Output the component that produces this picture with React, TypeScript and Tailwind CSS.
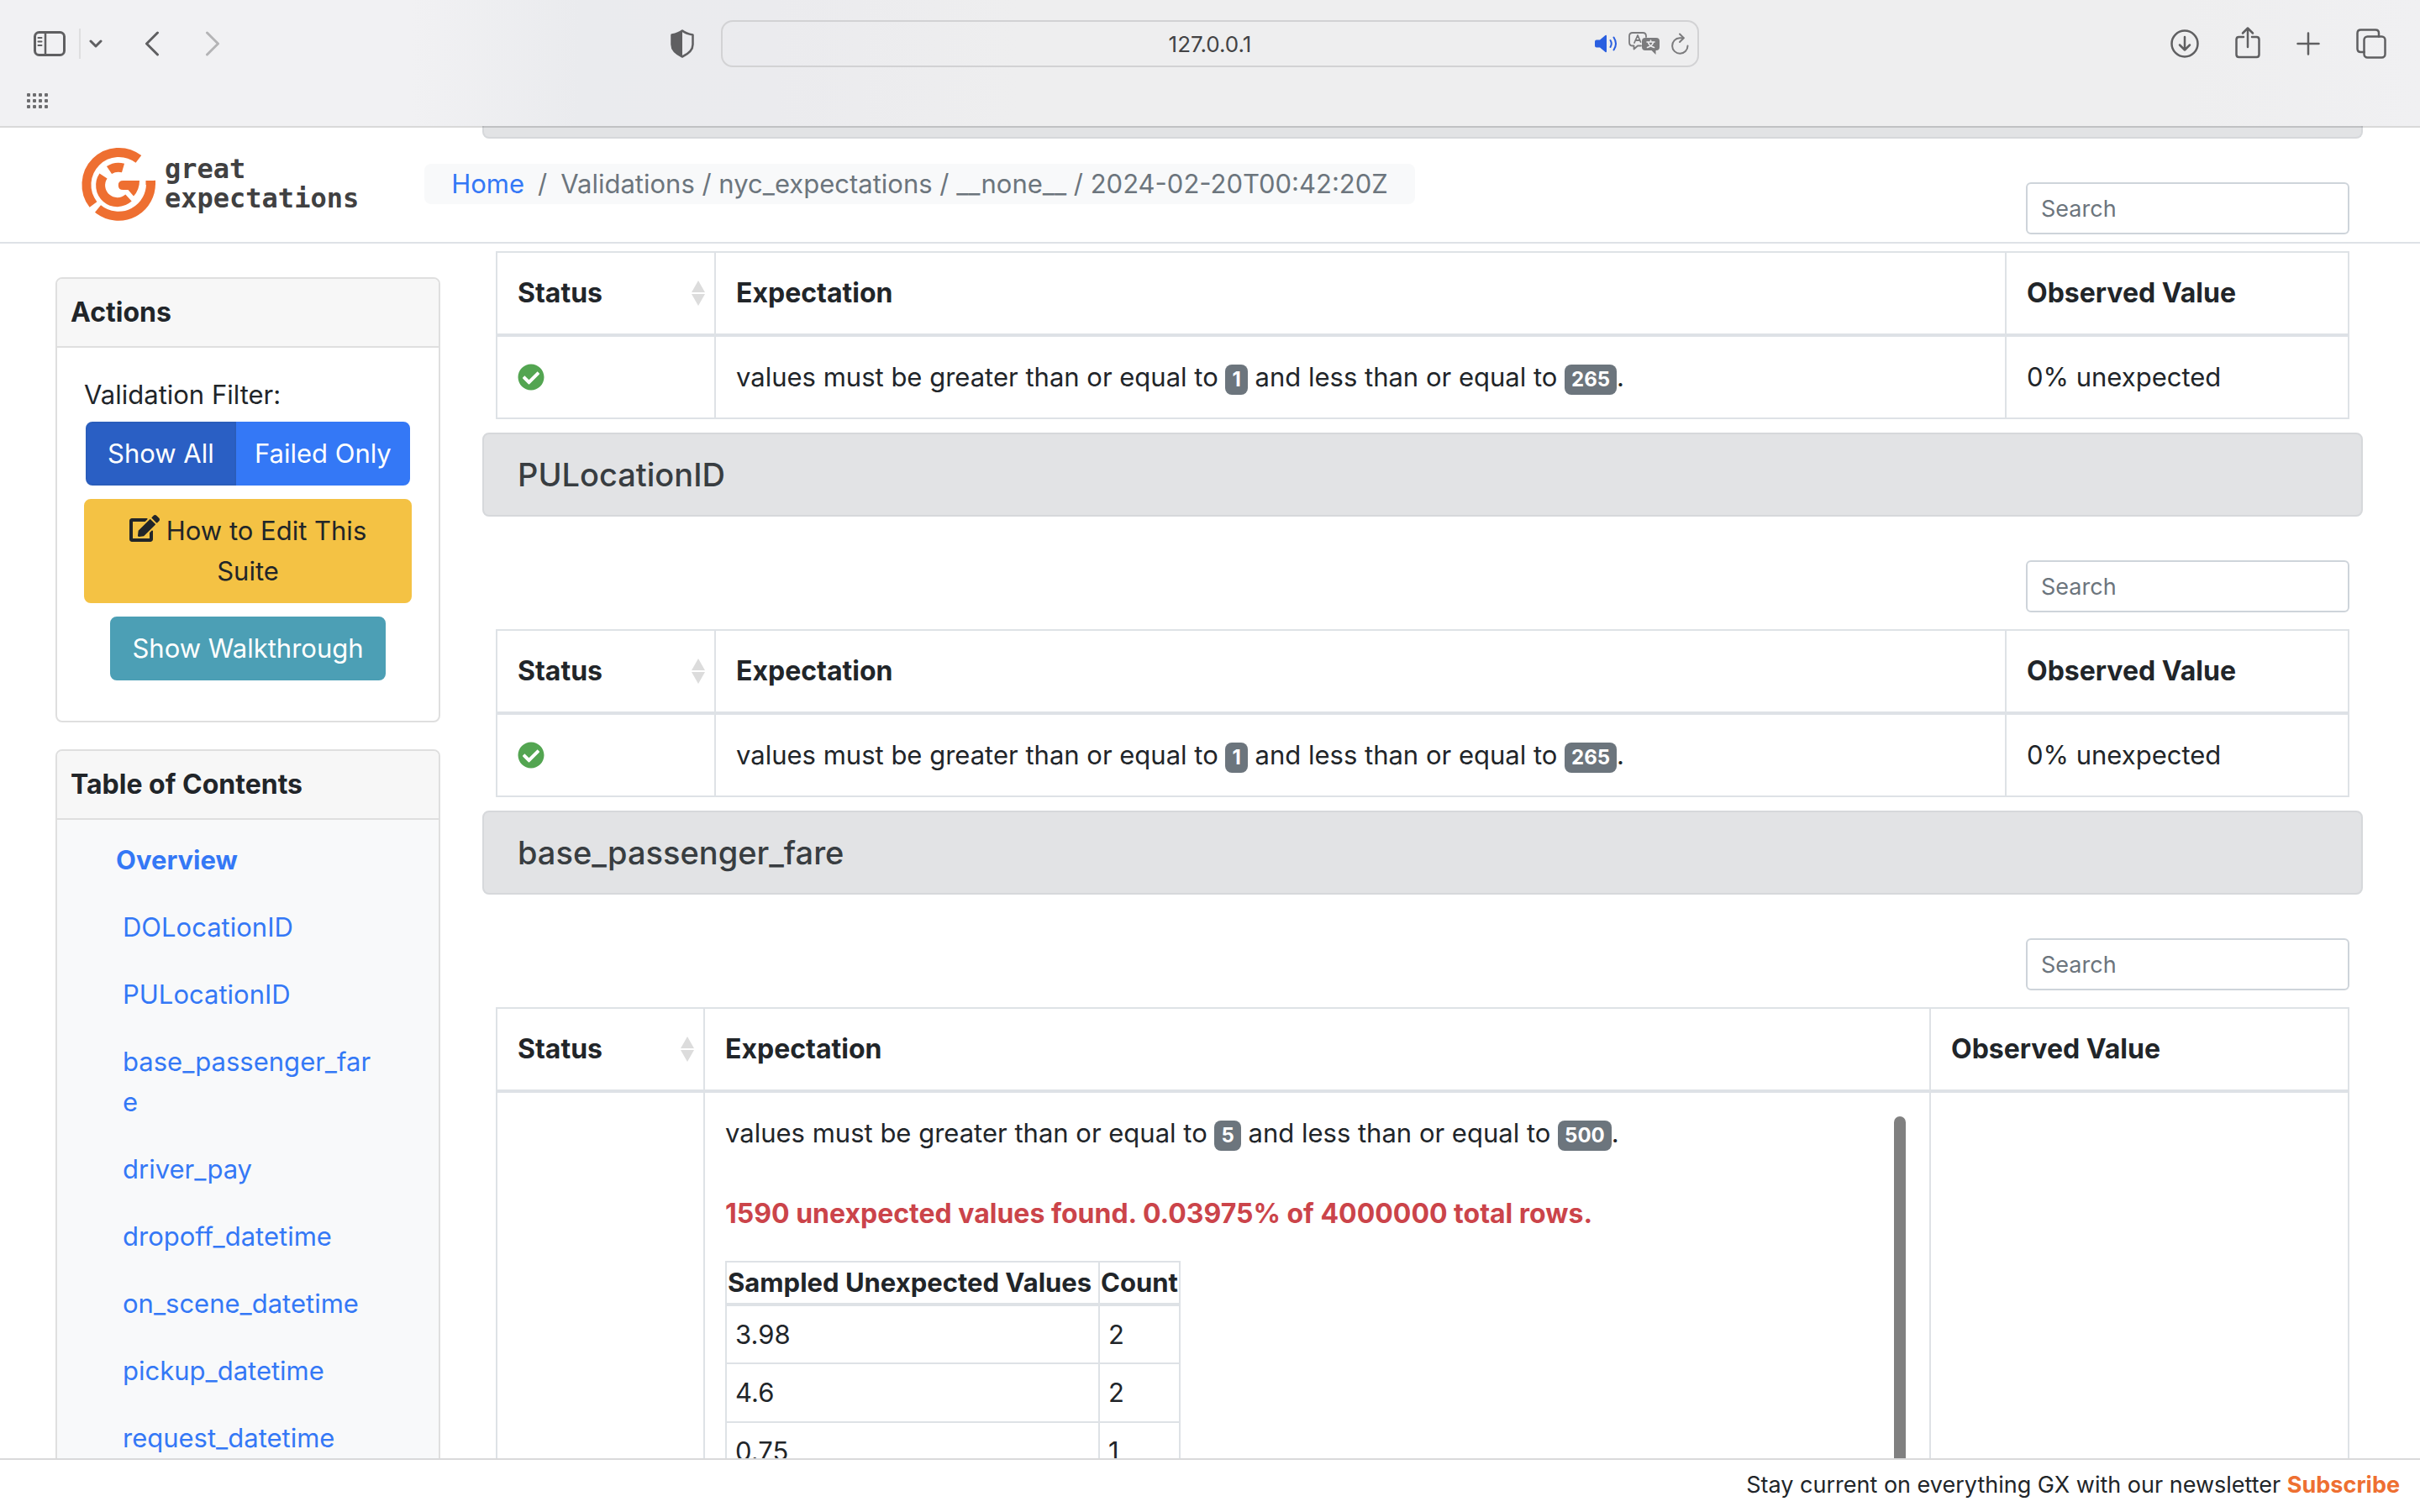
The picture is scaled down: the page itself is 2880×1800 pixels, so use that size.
import { FaCheckCircle, FaEdit } from "react-icons/fa";
import type { ReactNode } from "react";

const stroke = { fill: "none", stroke: "currentColor", strokeWidth: 3, strokeLinecap: "round", strokeLinejoin: "round" } as const;

function SidebarIcon() {
  return (
    <svg viewBox="0 0 38 30" className="h-[30px] w-[38px]" {...stroke}>
      <rect x="1.5" y="1.5" width="35" height="27" rx="5" />
      <path d="M14 2v26" strokeWidth="2.5" />
      <path d="M5.500 8h4M5.500 12.500h4M5.500 17h4" strokeWidth="2" />
    </svg>
  );
}

function ShieldIcon() {
  return (
    <svg viewBox="0 0 28 34" className="h-[34px] w-[28px]" fill="none">
      <path d="M14 1.500C17 4 21 5.500 26.500 6.500V18c0 7-5 11-12.500 14.500C6.500 29 1.500 25 1.500 18V6.500C7 5.500 11 4 14 1.500Z" stroke="currentColor" strokeWidth="2.500" strokeLinejoin="round" />
      <path d="M14 1.500C11 4 7 5.500 1.500 6.500V18c0 7 5 11 12.500 14.500Z" fill="currentColor" />
    </svg>
  );
}

function SpeakerIcon() {
  return (
    <svg viewBox="0 0 28 24" className="h-6 w-7" fill="none">
      <path d="M0 9.500Q0 7.500 2 7.500H6L12.500 2Q14 1 14 3V21Q14 23 12.500 22L6 16.500H2Q0 16.500 0 14.500Z" fill="currentColor" />
      <path d="M18.500 8Q21 12 18.500 16M22.500 4.500Q27.500 12 22.500 19.500" stroke="currentColor" strokeWidth="2" strokeLinecap="round" />
    </svg>
  );
}

function TranslateIcon() {
  return (
    <svg viewBox="0 0 38 28" className="h-7 w-[38px]" fill="none" strokeLinecap="round" strokeLinejoin="round">
      <path d="M15 16.500H11L6.500 20.500V16.500H5Q1 16.500 1 12.500V5Q1 1 5 1H17Q21 1 21 5V6" stroke="currentColor" strokeWidth="1.800" />
      <path d="M7 13L11 4L14.500 12M8.500 10H13" stroke="currentColor" strokeWidth="1.800" />
      <path d="M20 7H33Q37 7 37 11V18Q37 22 33 22H32.500V27L27.500 22H20Q16 22 16 18V11Q16 7 20 7Z" fill="currentColor" />
      <path d="M22 12H31M26.500 10V12M29.500 12.500Q28 17 22.500 18.500M23.500 12.500Q25 17 30.500 18.500" stroke="#efeff1" strokeWidth="1.600" />
    </svg>
  );
}

function ReloadIcon() {
  return (
    <svg viewBox="0 0 22 26" className="h-[26px] w-[22px]" fill="none" stroke="currentColor" strokeWidth="2" strokeLinecap="round" strokeLinejoin="round">
      <path d="M15.500 6.300H11a9.200 9.200 0 1 0 9.500 9.200" />
      <path d="M11 1.500L15.800 6.300L11 11" />
    </svg>
  );
}

function BrowserButton({ label, children }: { label: string; children: ReactNode }) {
  return (
    <button type="button" aria-label={label} className="flex shrink-0 items-center justify-center">
      {children}
    </button>
  );
}

function BrowserBar() {
  return (
    <header className="relative z-20 h-[150px] shrink-0 bg-[linear-gradient(90deg,#f1f1f3_0%,#f1f1f3_17%,#eaebee_24%,#ebebee_32%,#eeeeef_42%,#eeeeef_90%,#f0f0f2_100%)] text-[#5f5f61] after:absolute after:inset-x-0 after:top-full after:h-0.5 after:bg-black/15">
      <div className="grid h-[104px] grid-cols-[1fr_1164px_1fr] items-center px-10">
        <div className="flex items-center">
          <BrowserButton label="Sidebar"><SidebarIcon /></BrowserButton>
          <span className="ml-4 h-9 w-0.5 bg-[#dededf]" />
          <button type="button" aria-label="Tab groups" className="ml-2.5">
            <svg viewBox="0 0 16 12" className="h-3 w-4" {...stroke}><path d="M2 3l6 6 6-6" /></svg>
          </button>
          <button type="button" aria-label="Back" className="ml-[50px]">
            <svg viewBox="0 0 18 30" className="h-[30px] w-[18px]" {...stroke}><path d="M15.500 2L2.500 15l13 13" /></svg>
          </button>
          <button type="button" aria-label="Forward" className="ml-[54px] text-[#b4b4b6]">
            <svg viewBox="0 0 18 30" className="h-[30px] w-[18px]" {...stroke}><path d="M2.500 2l13 13-13 13" /></svg>
          </button>
          <span className="flex-1" />
          <button type="button" aria-label="Privacy report" className="mr-8"><ShieldIcon /></button>
        </div>
        <div className="relative flex items-center">
          <input aria-label="Address" defaultValue="127.0.0.1" className="h-14 w-full rounded-[14px] border-2 border-[#d2d2d4] bg-transparent text-center text-[26px] text-[#434345]" />
          <div className="absolute right-3 flex items-center gap-3 text-[#7b7b7d]">
            <button type="button" aria-label="Mute" className="text-[#2a5fe0]"><SpeakerIcon /></button>
            <BrowserButton label="Translate"><TranslateIcon /></BrowserButton>
            <BrowserButton label="Reload"><ReloadIcon /></BrowserButton>
          </div>
        </div>
        <div className="flex items-center justify-end gap-[43px]">
          <BrowserButton label="Downloads">
            <svg viewBox="0 0 34 34" className="size-[34px]" {...stroke} strokeWidth="2.500"><circle cx="17" cy="17" r="15.500" /><path d="M17 9v15.500M11 18.500l6 6 6-6" /></svg>
          </BrowserButton>
          <BrowserButton label="Share">
            <svg viewBox="0 0 30 42" className="h-[42px] w-[30px]" {...stroke} strokeWidth="2.500"><path d="M10 13H4.500Q1.500 13 1.500 16V34Q1.500 37 4.500 37H25.500Q28.500 37 28.500 34V16Q28.500 13 25.500 13H20M15 25V3M9 8.500L15 2.500L21 8.500" /></svg>
          </BrowserButton>
          <BrowserButton label="New tab">
            <svg viewBox="0 0 28 28" className="size-7" {...stroke} strokeWidth="2.500"><path d="M14 1.500v25M1.500 14h25" /></svg>
          </BrowserButton>
          <BrowserButton label="Tab overview">
            <svg viewBox="0 0 36 36" className="size-9" {...stroke} strokeWidth="2.500"><path d="M9.500 28H5.500Q1.500 28 1.500 24V5.500Q1.500 1.500 5.500 1.500H23Q27 1.500 27 5.500V9.500" /><rect x="9.500" y="9.500" width="25" height="25" rx="4" /></svg>
          </BrowserButton>
        </div>
      </div>
      <button type="button" aria-label="Favorites" className="ml-8 grid grid-cols-4 gap-[3px] pt-[7px]">
        {Array.from({ length: 12 }, (_, i) => (
          <span key={i} className="size-1 rounded-[1px] bg-[#6d6d6f]" />
        ))}
      </button>
    </header>
  );
}

function Logo() {
  return (
    <a href="#home" className="flex items-center gap-2.5" aria-label="great expectations">
      <svg viewBox="16 14 90 90" className="size-[90px]" fill="none" stroke="#ee6f31">
        <path d="M84.900 29.400A38.500 38.500 0 0 0 31 83.500" strokeWidth="11" />
        <path d="M36.500 88.500A38.500 38.500 0 0 0 99.300 55.200" strokeWidth="11" />
        <path d="M66.500 40A20 20 0 0 0 50 42.500" strokeWidth="11" />
        <path d="M43 49.500A20 20 0 0 0 73 75.500" strokeWidth="11" />
        <path d="M86 55H66.500Q60.800 55 60.800 60.500T66.500 66H72.500L79 73.500Q86 66 86 55Z" fill="#ee6f31" stroke="none" />
        <path d="M93.500 55H105V60H93.500Z" fill="#ee6f31" stroke="none" />
      </svg>
      <span className="block font-['DejaVu_Sans_Mono','Liberation_Mono',monospace] text-[32px] leading-[35px] font-bold text-[#404041]">
        great
        <br />
        expectations
      </span>
    </a>
  );
}

function Navbar() {
  return (
    <nav className="pointer-events-none absolute inset-x-0 top-0 z-10 flex h-[140px] items-center border-b-2 border-[#dee2e6] pl-24">
      <Logo />
      <ol className="ml-[78px] flex rounded-lg bg-[#f8f9fa] px-8 text-[31px] leading-[48px] text-[#6c757d]">
        <li><a href="#home" className="text-[#3478f6]">Home</a></li>
        <li className="pl-4">/<span className="pl-4">Validations / nyc_expectations / __none__ / 2024-02-20T00:42:20Z</span></li>
      </ol>
    </nav>
  );
}

function CardTitle({ children }: { children: ReactNode }) {
  return <h2 className="rounded-t-md border-b-2 border-[#dfdfdf] bg-[#f7f7f7] p-4 text-[32px] leading-[48px] font-bold">{children}</h2>;
}

function ActionsCard() {
  return (
    <section className="rounded-lg border-2 border-[#dfdfdf] bg-white">
      <CardTitle>Actions</CardTitle>
      <div className="flex flex-col items-center gap-4 px-8 pt-8 pb-12">
        <div className="w-full">
          <p className="pb-2">Validation Filter:</p>
          <div className="flex justify-center px-0.5 text-white" role="group" aria-label="Validation Filter">
            <button type="button" className="rounded-l-lg border-2 border-[#2a5dbb] bg-[#2a5fc4] px-6 py-3">Show All</button>
            <button type="button" className="flex-1 rounded-r-lg border-2 border-[#3478f6] bg-[#3478f6] py-3 whitespace-nowrap">Failed Only</button>
          </div>
        </div>
        <button type="button" className="w-full rounded-lg border-2 border-[#f4c244] bg-[#f4c244] px-6 py-3">
          <FaEdit className="mr-2 inline-block size-9 align-[-4px]" />
          How to Edit This Suite
        </button>
        <button type="button" className="rounded-lg border-2 border-[#4c9fb5] bg-[#4c9fb5] px-6 py-3 text-white">Show Walkthrough</button>
      </div>
    </section>
  );
}

const columns = [
  "DOLocationID",
  "PULocationID",
  "base_passenger_fare",
  "driver_pay",
  "dropoff_datetime",
  "on_scene_datetime",
  "pickup_datetime",
  "request_datetime",
];

function ContentsCard() {
  return (
    <section className="rounded-lg border-2 border-[#dfdfdf] bg-[#f8f9fa]">
      <CardTitle>Table of Contents</CardTitle>
      <nav className="flex flex-col pt-2 pr-[72px] pl-[70px] text-[#3478f6]">
        <a href="#overview" className="py-4 font-bold">Overview</a>
        {columns.map((name) => (
          <a key={name} href={`#${name}`} className="py-4 pl-2 break-all">{name}</a>
        ))}
      </nav>
    </section>
  );
}

function SortArrows() {
  return (
    <svg viewBox="0 0 18 32" className="h-8 w-[18px] shrink-0" fill="#dcdcdc">
      <path d="M9 1L17 15H1ZM9 31L17 17H1Z" />
    </svg>
  );
}

function Badge({ children }: { children: ReactNode }) {
  return <span className="inline-block rounded-lg bg-[#6c757d] px-2 py-[6px] align-baseline text-[24px] leading-6 font-bold text-white">{children}</span>;
}

function Rule({ min, max }: { min: string; max: string }) {
  return (
    <p>
      values must be greater than or equal to <Badge>{min}</Badge> and less than or equal to <Badge>{max}</Badge>.
    </p>
  );
}

function Search({ id }: { id: string }) {
  return (
    <div className="mt-[52px] mb-5 flex justify-end px-4">
      <input type="search" aria-label={`Search ${id}`} placeholder="Search" className="h-[62px] w-[385px] rounded-md border-2 border-[#ced4da] bg-white px-4 text-[27px] placeholder:text-[#6c757d]" />
    </div>
  );
}

function SectionTitle({ children }: { children: ReactNode }) {
  return <h3 className="mt-4 rounded-lg border-2 border-[#d6d8db] bg-[#e2e3e5] px-10 py-6 text-[38px] leading-[48px] font-medium text-[#383d41]">{children}</h3>;
}

const cell = "border-2 border-[#dee2e6] p-6 text-left align-top";
const headCell = "border-2 border-b-4 border-[#dee2e6] py-6 pl-6 text-left align-top text-[32px] leading-[48px]";

function ResultTable({ wide, status, rule, observed }: { wide?: boolean; status?: ReactNode; rule: ReactNode; observed?: string }) {
  return (
    <div className="px-4">
      <table className="w-full table-fixed border-collapse">
        <colgroup>
          <col className={wide ? "w-[247px]" : "w-[260px]"} />
          <col />
          <col className={wide ? "w-[498px]" : "w-[408px]"} />
        </colgroup>
        <thead>
          <tr>
            <th className={`${headCell} pr-2.5`}>
              <span className="flex items-center justify-between">Status <SortArrows /></span>
            </th>
            <th className={headCell}>Expectation</th>
            <th className={headCell}>Observed Value</th>
          </tr>
        </thead>
        <tbody>
          <tr>
            <td className={cell}>{status}</td>
            <td className={cell}>{rule}</td>
            <td className={cell}>{observed}</td>
          </tr>
        </tbody>
      </table>
    </div>
  );
}

const samples = [["3.98", "2"], ["4.6", "2"], ["0.75", "1"]];

function FailedRule() {
  return (
    <div className="flex">
      <div className="flex-1">
        <Rule min="5" max="500" />
        <p className="pt-12 pb-8 text-[32px] leading-[48px] font-bold text-[#cb444a]">1590 unexpected values found. 0.03975% of 4000000 total rows.</p>
        <table className="border-collapse">
          <thead>
            <tr>
              <th className="w-[444px] border-2 border-b-4 border-[#dee2e6] px-px text-left whitespace-nowrap">Sampled Unexpected Values</th>
              <th className="w-24 border-2 border-b-4 border-[#dee2e6] px-px text-left">Count</th>
            </tr>
          </thead>
          <tbody>
            {samples.map(([value, count]) => (
              <tr key={value} className="h-[70px]">
                <td className="border-2 border-[#dee2e6] px-2.5">{value}</td>
                <td className="border-2 border-[#dee2e6] px-2.5">{count}</td>
              </tr>
            ))}
          </tbody>
        </table>
      </div>
      <div className="mt-1 mr-1 w-3.5 rounded-t-full bg-[#808080]" />
    </div>
  );
}

const passed = (
  <span className="flex h-12 items-center">
    <FaCheckCircle className="size-8 text-[#53a551]" aria-label="Passed" />
  </span>
);

export default function App() {
  return (
    <div className="flex h-screen flex-col overflow-hidden bg-white font-['Inter','Liberation_Sans',sans-serif] text-[31px] leading-[48px] text-[#212529]">
      <BrowserBar />
      <div className="relative flex min-h-0 flex-1 overflow-hidden pr-[68px] pl-[66px]">
        <Navbar />
        <aside className="flex w-[458px] shrink-0 flex-col gap-8 pt-[180px]">
          <ActionsCard />
          <ContentsCard />
        </aside>
        <main className="ml-[50px] min-w-0 flex-1">
          <div className="h-[15px] rounded-b-lg border-2 border-t-0 border-[#d6d8db] bg-[#e2e3e5]" />
          <Search id="DOLocationID" />
          <ResultTable status={passed} rule={<Rule min="1" max="265" />} observed="0% unexpected" />
          <SectionTitle>PULocationID</SectionTitle>
          <Search id="PULocationID" />
          <ResultTable status={passed} rule={<Rule min="1" max="265" />} observed="0% unexpected" />
          <SectionTitle>base_passenger_fare</SectionTitle>
          <Search id="base_passenger_fare" />
          <ResultTable wide rule={<FailedRule />} />
        </main>
      </div>
      <footer className="z-10 h-16 shrink-0 border-t-2 border-[#d9d9da] bg-white pt-1.5 pr-6 text-right text-[27px]">
        Stay current on everything GX with our newsletter <a href="#subscribe" className="font-bold text-[#ee6f31]">Subscribe</a>
      </footer>
    </div>
  );
}
